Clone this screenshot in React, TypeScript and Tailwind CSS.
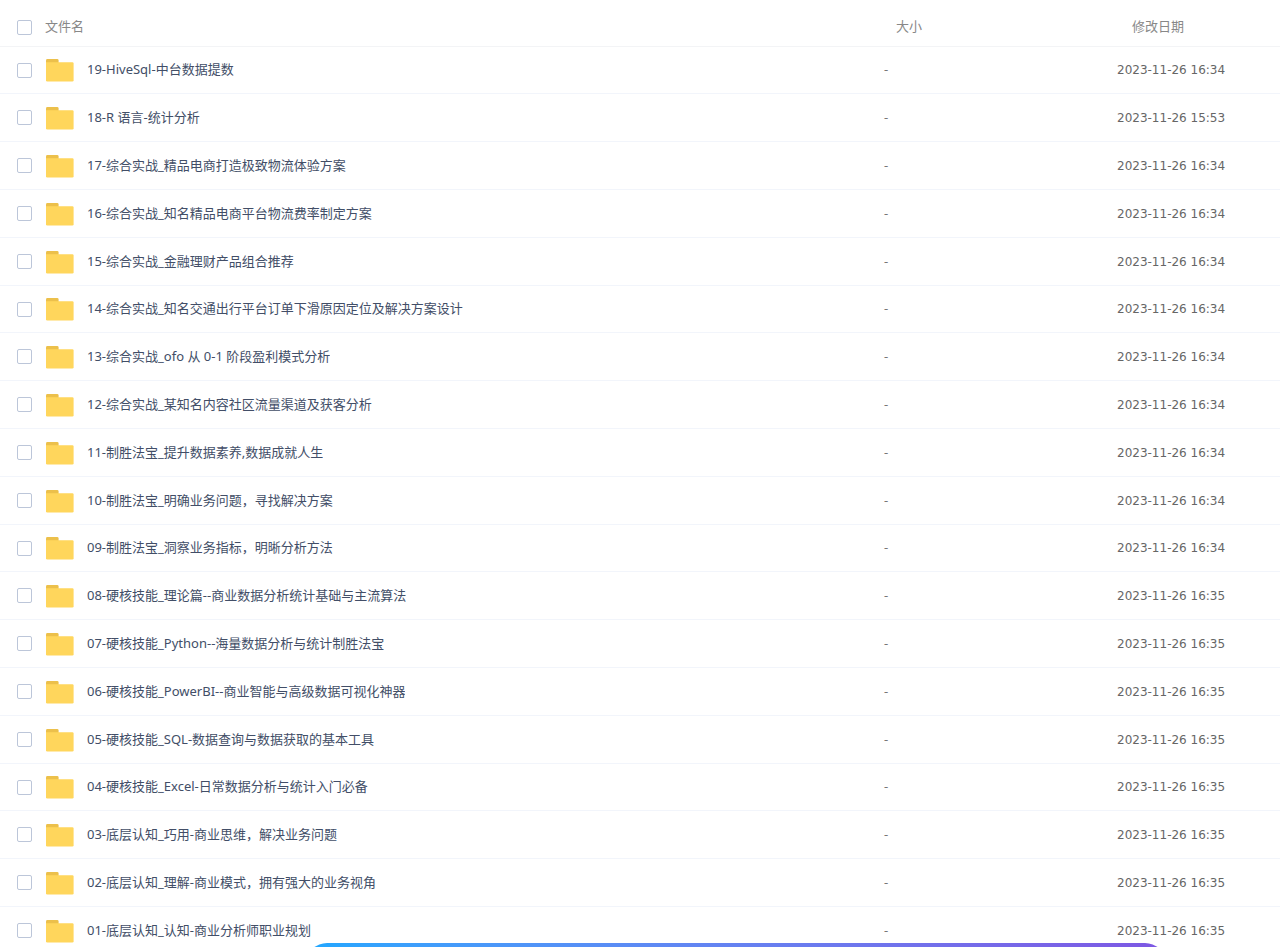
import { useState } from 'react';

interface FileItem {
  name: string;
  size: string;
  date: string;
}

const files: FileItem[] = [
  { name: '19-HiveSql-中台数据提数', size: '-', date: '2023-11-26 16:34' },
  { name: '18-R 语言-统计分析', size: '-', date: '2023-11-26 15:53' },
  { name: '17-综合实战_精品电商打造极致物流体验方案', size: '-', date: '2023-11-26 16:34' },
  { name: '16-综合实战_知名精品电商平台物流费率制定方案', size: '-', date: '2023-11-26 16:34' },
  { name: '15-综合实战_金融理财产品组合推荐', size: '-', date: '2023-11-26 16:34' },
  { name: '14-综合实战_知名交通出行平台订单下滑原因定位及解决方案设计', size: '-', date: '2023-11-26 16:34' },
  { name: '13-综合实战_ofo 从 0-1 阶段盈利模式分析', size: '-', date: '2023-11-26 16:34' },
  { name: '12-综合实战_某知名内容社区流量渠道及获客分析', size: '-', date: '2023-11-26 16:34' },
  { name: '11-制胜法宝_提升数据素养,数据成就人生', size: '-', date: '2023-11-26 16:34' },
  { name: '10-制胜法宝_明确业务问题，寻找解决方案', size: '-', date: '2023-11-26 16:34' },
  { name: '09-制胜法宝_洞察业务指标，明晰分析方法', size: '-', date: '2023-11-26 16:34' },
  { name: '08-硬核技能_理论篇--商业数据分析统计基础与主流算法', size: '-', date: '2023-11-26 16:35' },
  { name: '07-硬核技能_Python--海量数据分析与统计制胜法宝', size: '-', date: '2023-11-26 16:35' },
  { name: '06-硬核技能_PowerBI--商业智能与高级数据可视化神器', size: '-', date: '2023-11-26 16:35' },
  { name: '05-硬核技能_SQL-数据查询与数据获取的基本工具', size: '-', date: '2023-11-26 16:35' },
  { name: '04-硬核技能_Excel-日常数据分析与统计入门必备', size: '-', date: '2023-11-26 16:35' },
  { name: '03-底层认知_巧用-商业思维，解决业务问题', size: '-', date: '2023-11-26 16:35' },
  { name: '02-底层认知_理解-商业模式，拥有强大的业务视角', size: '-', date: '2023-11-26 16:35' },
  { name: '01-底层认知_认知-商业分析师职业规划', size: '-', date: '2023-11-26 16:35' },
];

function FolderIcon() {
  return (
    <svg className="h-6 w-7 shrink-0" viewBox="0 0 28 24" aria-hidden="true">
      <path d="M0 2.400Q0 1 1.400 1H11.200Q12.600 1 12.600 2.400V8H0Z" fill="#ecc04b" />
      <path d="M0 4.300H26.300Q27.600 4.300 27.600 5.600V22.200Q27.600 23.500 26.300 23.500H1.300Q0 23.500 0 22.200Z" fill="#ffd65c" />
    </svg>
  );
}

interface CheckboxProps {
  label: string;
  checked: boolean;
  onChange: () => void;
}

function Checkbox({ label, checked, onChange }: CheckboxProps) {
  return (
    <input
      type="checkbox"
      aria-label={label}
      checked={checked}
      onChange={onChange}
      className="block size-[15px] appearance-none rounded-xs border border-[#bcc6d9] bg-white checked:border-[#06a7ff] checked:bg-[#06a7ff]"
    />
  );
}

export default function App() {
  const [selected, setSelected] = useState<string[]>([]);
  const allSelected = selected.length === files.length;

  const toggle = (name: string) =>
    setSelected((prev) => (prev.includes(name) ? prev.filter((n) => n !== name) : [...prev, name]));

  return (
    <main className="h-screen overflow-hidden bg-white font-['Noto_Sans','Noto_Sans_CJK_SC',sans-serif] text-[13px] leading-5">
      <table className="w-full table-fixed border-separate border-spacing-0 text-left">
        <colgroup>
          <col className="w-[45px]" />
          <col />
          <col className="w-[233px]" />
          <col className="w-[163px]" />
        </colgroup>
        <thead className="text-[#888888]">
          <tr className="h-[47px]">
            <th className="border-b border-[#f3f4f6] pt-2 pl-[17px]">
              <Checkbox
                label="全选"
                checked={allSelected}
                onChange={() => setSelected(allSelected ? [] : files.map((f) => f.name))}
              />
            </th>
            <th className="border-b border-[#f3f4f6] pt-1.5 font-normal">文件名</th>
            <th className="border-b border-[#f3f4f6] pt-1.5 pl-3 font-normal">大小</th>
            <th className="border-b border-[#f3f4f6] pt-1.5 pl-[15px] font-normal">修改日期</th>
          </tr>
        </thead>
        <tbody>
          {files.map((file) => (
            <tr key={file.name} className="h-[48px] hover:bg-[#f7f9fc] nth-[5n+1]:h-[47px]">
              <td className="border-b border-[#f2f5fb] pl-[17px]">
                <Checkbox
                  label={file.name}
                  checked={selected.includes(file.name)}
                  onChange={() => toggle(file.name)}
                />
              </td>
              <td className="border-b border-[#f2f5fb] pl-px">
                <div className="flex items-center gap-[13px]">
                  <FolderIcon />
                  <a href="#" className="truncate pb-0.5 text-[#424e67]">
                    {file.name}
                  </a>
                </div>
              </td>
              <td className="border-b border-[#f2f5fb] pb-0.5 text-[#777777]">{file.size}</td>
              <td className="border-b border-[#f2f5fb] font-['DejaVu_Sans',sans-serif] text-xs leading-5 text-[#666666]">
                {file.date}
              </td>
            </tr>
          ))}
        </tbody>
      </table>

      {/* Floating bar, only its top edge is on screen */}
      <div className="fixed right-[9%] -bottom-9 left-[24%] h-10 rounded-full bg-linear-to-r from-[#1ea7ff] to-[#7d57e3]" />
    </main>
  );
}
